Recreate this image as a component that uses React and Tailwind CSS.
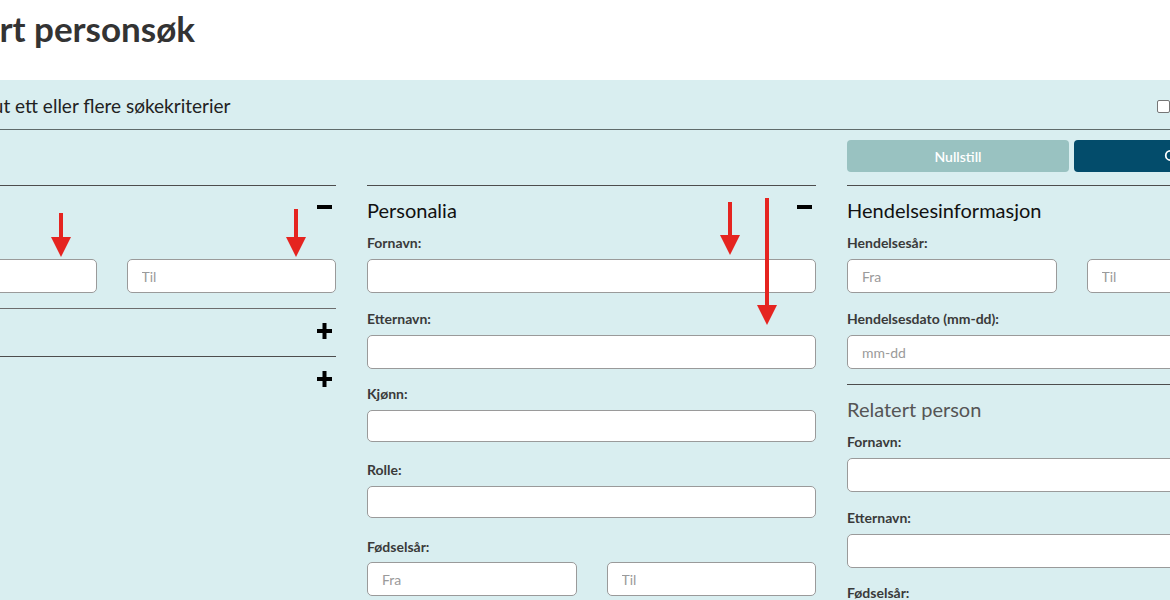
import React from 'react';
import { Search } from 'lucide-react';

// Collapse / expand glyphs used in the section headers
function Minus({ className = '' }) {
  return (
    <svg viewBox="0 0 15 4" width="15" height="4" className={className}>
      <rect width="15" height="4" fill="#000" />
    </svg>
  );
}

function Plus({ className = '' }) {
  return (
    <svg viewBox="0 0 15 16" width="15" height="16" className={className}>
      <rect y="6" width="15" height="4" fill="#000" />
      <rect x="5.5" width="4" height="16" fill="#000" />
    </svg>
  );
}

function Input({ placeholder = '', h = 'h-[34px]' }) {
  return (
    <input
      type="text"
      placeholder={placeholder}
      className={`${h} w-full rounded-[5px] border border-[#9a9a9a] bg-white pl-[14px] text-[14px] text-[#333] placeholder:text-[#9a9a9a] outline-none`}
    />
  );
}

function Label({ children }) {
  return <div className="h-[20px] text-[14px] leading-[20px] font-bold text-[#3a3a3a]">{children}</div>;
}

function Field({ label, className = '', h }) {
  return (
    <div className={className}>
      <Label>{label}</Label>
      <div className="mt-[6px]">
        <Input h={h} />
      </div>
    </div>
  );
}

function RangeField({ label, className = '', gap = 'mt-[6px]' }) {
  return (
    <div className={className}>
      <Label>{label}</Label>
      <div className={`${gap} grid grid-cols-2 gap-x-[30px]`}>
        <Input placeholder="Fra" />
        <Input placeholder="Til" />
      </div>
    </div>
  );
}

function SectionHeader({ title, open = true, muted = false }) {
  return (
    <div className="flex h-[47px] justify-between">
      <h2 className={`pt-[10px] text-[20px] leading-[28px] ${muted ? 'text-[#555]' : 'text-[#111]'}`}>{title}</h2>
      {open ? <Minus className="mr-[4px] mt-[19px]" /> : <Plus className="mr-[4px] mt-[14px]" />}
    </div>
  );
}

// Red annotation arrows painted over the form
function Arrows() {
  const arrows = [
    { x: 61, y1: 213, y2: 240, tip: 257 },
    { x: 296, y1: 209, y2: 240, tip: 257 },
    { x: 730, y1: 202, y2: 238, tip: 255 },
    { x: 767, y1: 198, y2: 308, tip: 325 },
  ];
  return (
    <svg className="pointer-events-none absolute left-0 top-0" width="1170" height="600">
      {arrows.map((a) => (
        <g key={a.x} fill="#e52420">
          <rect x={a.x - 2} y={a.y1} width="4" height={a.y2 - a.y1} />
          <polygon points={`${a.x - 10},${a.tip - 20} ${a.x + 10},${a.tip - 20} ${a.x},${a.tip}`} />
        </g>
      ))}
    </svg>
  );
}

export default function App() {
  return (
    <div className="relative h-[600px] w-[1170px] overflow-hidden bg-white font-['Lato',sans-serif]">
      <div className="ml-[-113px] w-[1409px]">
        <h1 className="h-[80px] pt-[8px] text-[35px] leading-[40px] font-bold text-[#333]">Avansert personsøk</h1>
      </div>

      <div className="bg-[#d9eef0] pb-[40px]">
        <div className="ml-[-113px] w-[1409px]">
          {/* Instruction row */}
          <div className="flex h-[49px] items-center pt-[3px]">
            <p className="ml-[-6px] text-[19px] text-[#222]">Vennligst fyll ut ett eller flere søkekriterier</p>
            <label className="ml-auto flex w-[139px] items-center gap-[6px] text-[15px] text-[#222]">
              <span className="block h-[13px] w-[13px] rounded-[2px] border border-[#767676] bg-white" />
              Vis alle felt
            </label>
          </div>
          <div className="border-t border-[#5f6b6b]" />

          {/* Actions */}
          <div className="grid grid-cols-[449px_449px_449px] gap-x-[31px]">
            <div />
            <div />
            <div className="mt-[10px] flex h-[32px] gap-[5px]">
              <button type="button" className="flex-1 rounded-[4px] bg-[#99c2c1] text-[14px] font-semibold text-white">
                Nullstill
              </button>
              <button
                type="button"
                className="flex flex-1 items-center justify-center gap-[6px] rounded-[4px] bg-[#034c6b] text-[14px] font-semibold text-white"
              >
                <Search size={14} strokeWidth={3} />
                Søk
              </button>
            </div>
          </div>

          {/* Criteria columns */}
          <div className="mt-[13px] grid grid-cols-[449px_449px_449px] gap-x-[31px]">
            <div>
              <div className="border-t border-[#4d4d4d]">
                <SectionHeader title="Kilde" />
                <RangeField label="År:" />
              </div>
              <div className="mt-[15px] border-t border-[#6d6d6d]">
                <SectionHeader title="Sted" open={false} />
              </div>
              <div className="border-t border-[#4d4d4d]">
                <SectionHeader title="Annet" open={false} />
              </div>
            </div>

            <div className="border-t border-[#4d4d4d]">
              <SectionHeader title="Personalia" />
              <Field label="Fornavn:" />
              <Field label="Etternavn:" className="mt-[16px]" />
              <Field label="Kjønn:" className="mt-[15px]" h="h-[32px]" />
              <Field label="Rolle:" className="mt-[18px]" h="h-[32px]" />
              <RangeField label="Fødselsår:" className="mt-[19px]" gap="mt-[5px]" />
            </div>

            <div>
              <div className="border-t border-[#4d4d4d]">
                <SectionHeader title="Hendelsesinformasjon" />
                <RangeField label="Hendelsesår:" />
                <div className="mt-[16px]">
                  <Label>Hendelsesdato (mm-dd):</Label>
                  <div className="mt-[6px]">
                    <Input placeholder="mm-dd" />
                  </div>
                </div>
              </div>
              <div className="mt-[15px] border-t border-[#4d4d4d]">
                <SectionHeader title="Relatert person" muted />
                <Field label="Fornavn:" />
                <Field label="Etternavn:" className="mt-[16px]" />
                <RangeField label="Fødselsår:" className="mt-[15px]" />
              </div>
            </div>
          </div>
        </div>
      </div>

      <Arrows />
    </div>
  );
}
